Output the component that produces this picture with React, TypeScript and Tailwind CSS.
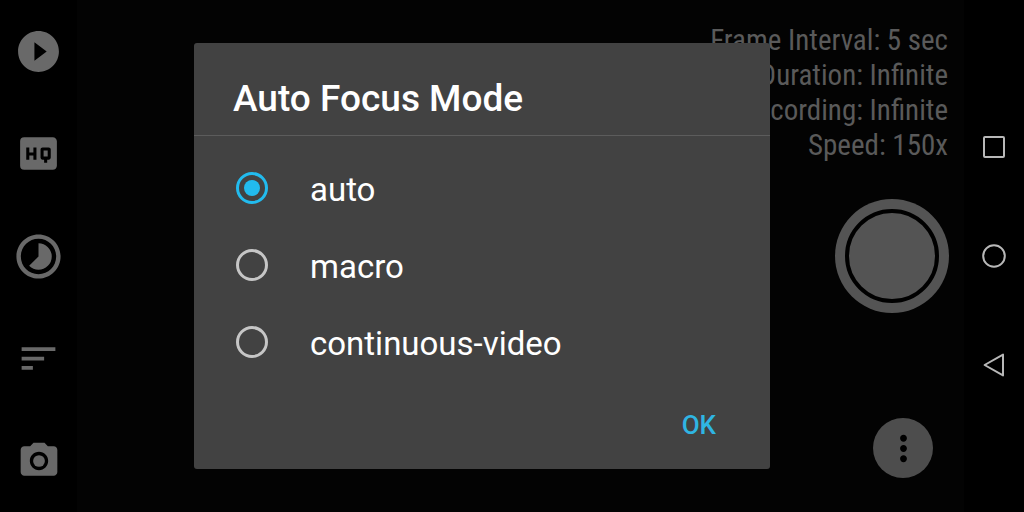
import { useState } from 'react';
import {
  MdHighQuality,
  MdMoreVert,
  MdPhotoCamera,
  MdPlayCircleFilled,
  MdSort,
  MdTimelapse,
} from 'react-icons/md';

const tools = [
  { label: 'Playback', Icon: MdPlayCircleFilled, size: 49 },
  { label: 'Quality', Icon: MdHighQuality, size: 49 },
  { label: 'Time lapse', Icon: MdTimelapse, size: 53 },
  { label: 'Sort', Icon: MdSort, size: 45 },
  { label: 'Photo camera', Icon: MdPhotoCamera, size: 44 },
];

const info = [
  'Frame Interval: 5 sec',
  'Duration: Infinite',
  'Recording: Infinite',
  'Speed: 150x',
];

const modes = ['auto', 'macro', 'continuous-video'];

function Toolbar() {
  return (
    <nav className="flex w-[77px] shrink-0 flex-col bg-black text-[#696969]">
      {tools.map(({ label, Icon, size }) => (
        <button key={label} type="button" aria-label={label} className="flex flex-1 items-center justify-center">
          <Icon size={size} />
        </button>
      ))}
    </nav>
  );
}

function Viewfinder() {
  return (
    <main className="grid flex-1 grid-rows-[1fr_auto_1fr] justify-items-end bg-[#030303]">
      <ul className="pt-[23px] pr-4 text-right font-['Roboto_Condensed','Liberation_Sans_Narrow',sans-serif] text-[29px] leading-[35px] text-[#5a5a5a]">
        {info.map((line) => (
          <li key={line}>{line}</li>
        ))}
      </ul>

      {/* Shutter */}
      <button type="button" aria-label="Record" className="mr-[15px] flex size-[114px] items-center justify-center rounded-full bg-[#545454]">
        <span className="size-[94px] rounded-full border-4 border-black" />
      </button>

      <button type="button" aria-label="More options" className="mr-[31px] mb-[34px] flex size-[60px] items-center justify-center self-end rounded-full bg-[#4d4d4d] text-black">
        <MdMoreVert size={41} />
      </button>
    </main>
  );
}

function FocusDialog() {
  const [mode, setMode] = useState('auto');

  return (
    <div className="absolute inset-0 flex items-center justify-center">
      <form
        role="dialog"
        aria-labelledby="focus-title"
        onSubmit={(e) => e.preventDefault()}
        className="w-xl max-w-full rounded-[3px] bg-[#424242]"
      >
        <h1 id="focus-title" className="border-b border-[#5c5c5c] px-[39px] pt-[34px] pb-[14px] text-[37px] leading-[44px] font-medium text-white">
          Auto Focus Mode
        </h1>

        <div className="pt-[13px]">
          {modes.map((m) => (
            <label key={m} className="flex h-[77px] items-center gap-[42px] px-[42px] text-[33px] leading-10 text-white">
              <input
                type="radio"
                name="focus-mode"
                value={m}
                checked={mode === m}
                onChange={() => setMode(m)}
                className="flex size-8 shrink-0 appearance-none items-center justify-center rounded-full border-[3px] border-[#c6c6c6] checked:border-[#22bbee] checked:before:size-4 checked:before:rounded-full checked:before:bg-[#22bbee] checked:before:content-['']"
              />
              <span className="pt-1">{m}</span>
            </label>
          ))}
        </div>

        <div className="flex justify-end px-10 pt-[19px] pb-[18px]">
          <button type="submit" className="h-[52px] px-[14px] text-[26px] leading-8 font-medium text-[#2fb5e3]">
            OK
          </button>
        </div>
      </form>
    </div>
  );
}

function SystemNav() {
  return (
    <nav className="flex w-[60px] shrink-0 flex-col items-center justify-center gap-[85px] bg-black text-[#b8b8b8]">
      <button type="button" aria-label="Recents">
        <svg className="size-6" viewBox="0 0 24 24" fill="none" stroke="currentColor" strokeWidth="2">
          <rect x="2" y="2" width="20" height="20" rx="1" />
        </svg>
      </button>
      <button type="button" aria-label="Home">
        <svg className="size-6" viewBox="0 0 24 24" fill="none" stroke="currentColor" strokeWidth="2">
          <circle cx="12" cy="12" r="10.8" />
        </svg>
      </button>
      <button type="button" aria-label="Back">
        <svg className="size-6" viewBox="0 0 24 24" fill="none" stroke="currentColor" strokeWidth="2" strokeLinejoin="round">
          <path d="M21 1.6v20.8L2.6 12z" />
        </svg>
      </button>
    </nav>
  );
}

export default function App() {
  return (
    <div className="flex min-h-screen bg-black font-['Roboto',sans-serif]">
      <div className="relative flex flex-1">
        <Toolbar />
        <Viewfinder />
        <FocusDialog />
      </div>
      <SystemNav />
    </div>
  );
}
